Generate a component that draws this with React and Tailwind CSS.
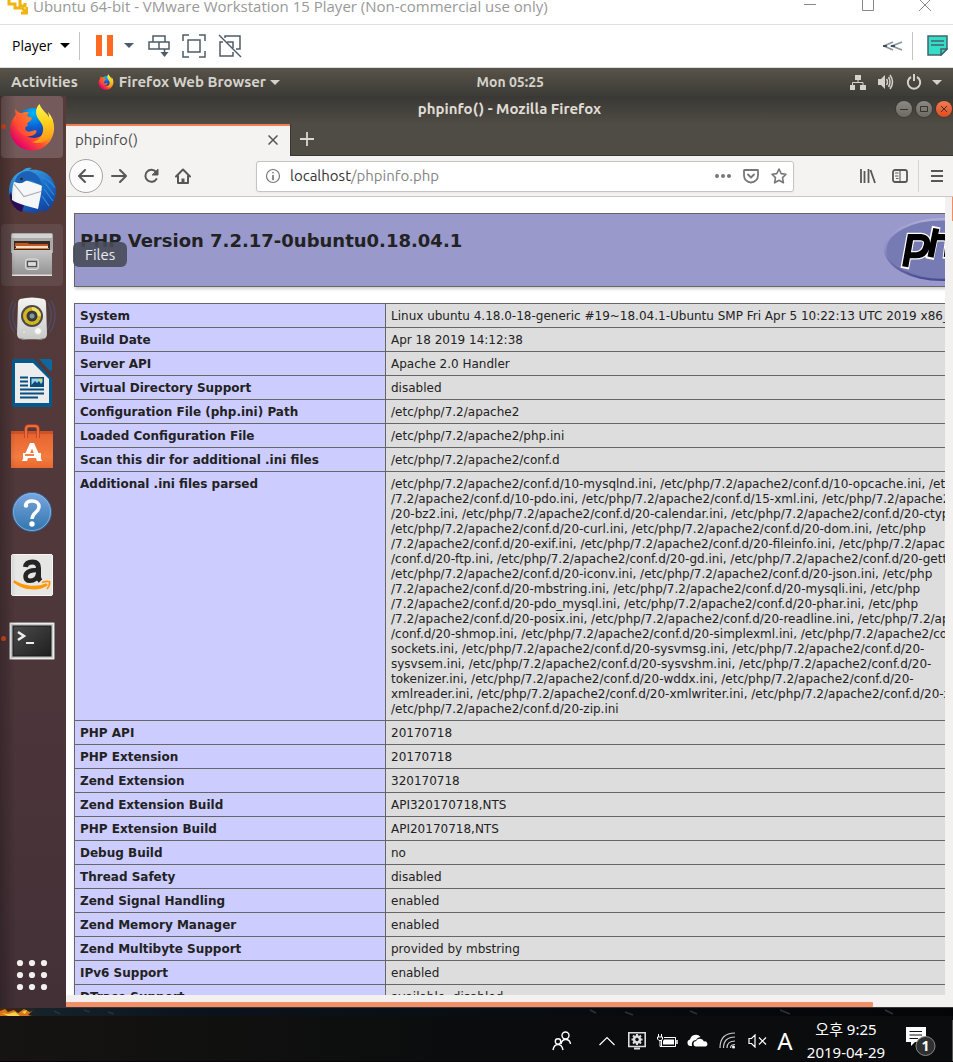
import React from "react";

const INFO_ROWS = [
  ["System", "Linux ubuntu 4.18.0-18-generic #19~18.04.1-Ubuntu SMP Fri Apr 5 10:22:13 UTC 2019 x86_64"],
  ["Build Date", "Apr 18 2019 14:12:38"],
  ["Server API", "Apache 2.0 Handler"],
  ["Virtual Directory Support", "disabled"],
  ["Configuration File (php.ini) Path", "/etc/php/7.2/apache2"],
  ["Loaded Configuration File", "/etc/php/7.2/apache2/php.ini"],
  ["Scan this dir for additional .ini files", "/etc/php/7.2/apache2/conf.d"],
  [
    "Additional .ini files parsed",
    [
      "/etc/php/7.2/apache2/conf.d/10-mysqlnd.ini, /etc/php/7.2/apache2/conf.d/10-opcache.ini, /etc/php",
      "/7.2/apache2/conf.d/10-pdo.ini, /etc/php/7.2/apache2/conf.d/15-xml.ini, /etc/php/7.2/apache2/conf.d",
      "/20-bz2.ini, /etc/php/7.2/apache2/conf.d/20-calendar.ini, /etc/php/7.2/apache2/conf.d/20-ctype.ini,",
      "/etc/php/7.2/apache2/conf.d/20-curl.ini, /etc/php/7.2/apache2/conf.d/20-dom.ini, /etc/php",
      "/7.2/apache2/conf.d/20-exif.ini, /etc/php/7.2/apache2/conf.d/20-fileinfo.ini, /etc/php/7.2/apache2",
      "/conf.d/20-ftp.ini, /etc/php/7.2/apache2/conf.d/20-gd.ini, /etc/php/7.2/apache2/conf.d/20-gettext.ini,",
      "/etc/php/7.2/apache2/conf.d/20-iconv.ini, /etc/php/7.2/apache2/conf.d/20-json.ini, /etc/php",
      "/7.2/apache2/conf.d/20-mbstring.ini, /etc/php/7.2/apache2/conf.d/20-mysqli.ini, /etc/php",
      "/7.2/apache2/conf.d/20-pdo_mysql.ini, /etc/php/7.2/apache2/conf.d/20-phar.ini, /etc/php",
      "/7.2/apache2/conf.d/20-posix.ini, /etc/php/7.2/apache2/conf.d/20-readline.ini, /etc/php/7.2/apache2",
      "/conf.d/20-shmop.ini, /etc/php/7.2/apache2/conf.d/20-simplexml.ini, /etc/php/7.2/apache2/conf.d/20-",
      "sockets.ini, /etc/php/7.2/apache2/conf.d/20-sysvmsg.ini, /etc/php/7.2/apache2/conf.d/20-",
      "sysvsem.ini, /etc/php/7.2/apache2/conf.d/20-sysvshm.ini, /etc/php/7.2/apache2/conf.d/20-",
      "tokenizer.ini, /etc/php/7.2/apache2/conf.d/20-wddx.ini, /etc/php/7.2/apache2/conf.d/20-",
      "xmlreader.ini, /etc/php/7.2/apache2/conf.d/20-xmlwriter.ini, /etc/php/7.2/apache2/conf.d/20-xsl.ini,",
      "/etc/php/7.2/apache2/conf.d/20-zip.ini",
    ],
  ],
  ["PHP API", "20170718"],
  ["PHP Extension", "20170718"],
  ["Zend Extension", "320170718"],
  ["Zend Extension Build", "API320170718,NTS"],
  ["PHP Extension Build", "API20170718,NTS"],
  ["Debug Build", "no"],
  ["Thread Safety", "disabled"],
  ["Zend Signal Handling", "enabled"],
  ["Zend Memory Manager", "enabled"],
  ["Zend Multibyte Support", "provided by mbstring"],
  ["IPv6 Support", "enabled"],
  ["DTrace Support", "available, disabled"],
];

function FirefoxIcon({ className, id }) {
  return (
    <svg viewBox="0 0 48 48" className={className} aria-hidden="true">
      <defs>
        <linearGradient id={id + "a"} x1="0.85" y1="0.1" x2="0.15" y2="0.85">
          <stop offset="0" stopColor="#fff44f" />
          <stop offset="0.35" stopColor="#ffa316" />
          <stop offset="0.65" stopColor="#ff4a32" />
          <stop offset="1" stopColor="#e4006c" />
        </linearGradient>
        <radialGradient id={id + "b"} cx="0.5" cy="0.15" r="0.9">
          <stop offset="0" stopColor="#00b7f5" />
          <stop offset="0.45" stopColor="#0a63d8" />
          <stop offset="1" stopColor="#2b1a78" />
        </radialGradient>
        <linearGradient id={id + "c"} x1="0.4" y1="0" x2="0.5" y2="1">
          <stop offset="0" stopColor="#fff44f" />
          <stop offset="0.45" stopColor="#ffd620" />
          <stop offset="1" stopColor="#ff9216" />
        </linearGradient>
        <linearGradient id={id + "d"} x1="1" y1="0" x2="0" y2="0.7">
          <stop offset="0" stopColor="#ff9a1e" />
          <stop offset="1" stopColor="#ff3f3a" />
        </linearGradient>
      </defs>
      <circle cx="25" cy="22" r="17" fill={"url(#" + id + "b)"} />
      <path
        d="M7 5.500C7.500 8 9 9.500 10.500 10C5 14 2 20 2 26C2 38 12 47.500 24 47.500C37 47.500 46 37 46 25C46 19 43.500 12.500 40 9C42.500 16 41 24 37 29C33.500 34 28 36 22.500 34.500C17 33 14.500 29.500 14.300 25.500C12 20 11 15 13.500 10.500C10 9.500 8 8 7 5.500Z"
        fill={"url(#" + id + "a)"}
      />
      <path
        d="M31.500 1C27.500 5 27 10 30 15.500C34 21 36.500 24 34.500 30C33 35 29 38.500 24 39C31 41.500 39 39 42.500 33C46 27.500 46.500 20 43.500 14C43 17 42.500 17.500 41.500 15.500C40 10.500 34 8 31.500 1Z"
        fill={"url(#" + id + "c)"}
      />
      <path
        d="M7 5.500C8 9 10 10.500 13 10.500C16.500 8.500 20 9 21 9.500C19.500 11 19 12.500 19.500 13.500L23.500 14.500C24 16 23.500 17.500 19.500 20C19 22 20 23 20 23C17 23 16 26 19 28C22 30 25 26.500 28 27.500C29.500 28 28 31.500 24.500 32.500C17 35 10 30 9 24Z"
        fill={"url(#" + id + "d)"}
      />
    </svg>
  );
}

function ThunderbirdIcon() {
  return (
    <svg viewBox="0 0 48 48" className="size-12" aria-hidden="true">
      <defs>
        <linearGradient id="tb" x1="0.3" y1="0" x2="0.8" y2="1">
          <stop offset="0" stopColor="#3fa6e0" />
          <stop offset="0.5" stopColor="#1a6cc8" />
          <stop offset="1" stopColor="#123f9b" />
        </linearGradient>
      </defs>
      <path d="M1 22C2 12 8 6 14 4C17 1 20 0 24 1C22 2 21 3 22 3C36 1 47 10 48 24C48 34 43 42 35 46C36 44 35 43 34 43L28 46C14 46 0 38 1 22Z" fill="url(#tb)" />
      <path d="M3 25C4 33 9 37 16 38L14 45C7 43 2 36 1.500 28Z" fill="#2d0d56" />
      <path d="M6 15L17 13L34 18.500L33 27L30 42C20 39 10 37 4 33C4 28 4 20 6 15Z" fill="#f5f6f7" />
      <path d="M6 17L16 29.500L33 24.500" fill="none" stroke="#a9adb5" strokeWidth="1.200" />
      <path d="M7 15C8 8 14 4 20 4C28 5 33 11 34 19C27 14 20 12 16 15C13 17 9 16 7 15Z" fill="#1c61b8" />
      <circle cx="13.500" cy="12" r="1.500" fill="#382a24" />
      <path d="M33 10C40 12 44 16 47 21M37 16L46 28M36 22L45 34M34 29L41 39" fill="none" stroke="#2f8cd8" strokeWidth="1.200" />
    </svg>
  );
}

function FilesIcon() {
  return (
    <svg viewBox="0 0 48 48" className="size-12" aria-hidden="true">
      <defs>
        <linearGradient id="fl" x1="0" y1="0" x2="0" y2="1">
          <stop offset="0" stopColor="#c6c6c6" />
          <stop offset="1" stopColor="#919191" />
        </linearGradient>
      </defs>
      <path d="M3 4Q3 2 5 2H43Q45 2 45 4V22H3Z" fill="#aaa" />
      <path d="M4 3H44V7H4Z" fill="#d2d2d2" />
      <path d="M6 10H42V20H6Z" fill="#342b27" />
      <path d="M7 13Q7 12 8 12H20L21 13H40V16H7Z" fill="#c4571f" />
      <path d="M8 15H40V17H8Z" fill="#f3dfca" />
      <path d="M7 17H41V18H7Z" fill="#e6772e" />
      <path d="M4 19H44L44 45H4Z" fill="url(#fl)" />
      <path d="M4 43.500H44V45H4Z" fill="#e2e2e2" />
      <rect x="17.500" y="28" width="13" height="10.500" rx="2.500" fill="#b8b8b8" stroke="#dedede" />
      <rect x="19.500" y="30.500" width="9" height="5" fill="#ddd" stroke="#525252" strokeWidth="1.200" />
    </svg>
  );
}

function RhythmboxIcon() {
  return (
    <svg viewBox="0 0 48 48" className="size-12" aria-hidden="true">
      <defs>
        <linearGradient id="rb" x1="0" y1="0" x2="0" y2="1">
          <stop offset="0" stopColor="#f4f4f3" />
          <stop offset="1" stopColor="#c9cac8" />
        </linearGradient>
      </defs>
      <path d="M5 6C0 14 0 28 6 37M8 8C3 16 4 27 9 35M43 6C49 14 48 28 42 37M40 8C45 16 44 27 39 35" fill="none" stroke="#4d5370" strokeOpacity="0.7" strokeWidth="1.500" />
      <path d="M12 4Q24 1 36 4Q38 5 38 8L39 39Q39 44 34 44H14Q9 44 9 39L10 8Q10 5 12 4Z" fill="url(#rb)" />
      <circle cx="24" cy="21" r="11" fill="#4b4a49" />
      <circle cx="24" cy="21" r="9" fill="#d5b622" />
      <path d="M24 12A9 9 0 0 1 33 21L24 21Z" fill="#f2df62" />
      <circle cx="24" cy="21" r="5.500" fill="#343b3f" />
      <circle cx="24" cy="21" r="2.500" fill="#8b9698" />
      <circle cx="30" cy="36" r="3.500" fill="#f8f8f8" stroke="#d6d6d5" />
      <circle cx="16" cy="37" r="2" fill="#e0e0df" stroke="#cacac9" />
      <path d="M12 43Q24 46 36 43L34 45H14Z" fill="#8a8385" />
    </svg>
  );
}

function WriterIcon() {
  return (
    <svg viewBox="0 0 48 48" className="size-12" aria-hidden="true">
      <path d="M6 0H26L44 20V46Q44 48 42 48H6Q4 48 4 46V2Q4 0 6 0Z" fill="#05598f" />
      <path d="M31 0H42Q44 0 44 2V12L41 11Z" fill="#0c689f" />
      <path d="M7 4H25L41 20V44H7Z" fill="#ededed" />
      <path d="M12 18.500H20M12 22.500H20M12 26.500H20M12 30.500H36M12 34.500H36M12 38.500H30" stroke="#064f7f" strokeWidth="2" />
      <rect x="22" y="18" width="14" height="10" fill="#0a4d78" />
      <path d="M23.500 19.500H34.500V23L33 25L31 22L29 24L27 22L23.500 26Z" fill="#9fd2e8" />
      <path d="M31 20H34V22H31Z" fill="#efd346" />
    </svg>
  );
}

function SoftwareIcon() {
  return (
    <svg viewBox="0 0 48 48" className="size-12" aria-hidden="true">
      <defs>
        <linearGradient id="sw" x1="0" y1="0" x2="0" y2="1">
          <stop offset="0" stopColor="#e3612f" />
          <stop offset="0.7" stopColor="#f37c3f" />
          <stop offset="1" stopColor="#e8682f" />
        </linearGradient>
      </defs>
      <path d="M3 8H45V45H3Z" fill="url(#sw)" />
      <path d="M3 8H45V11H3Z" fill="#cf5129" />
      <path d="M18 15V6Q18 3 21 3H27Q30 3 30 6V15" fill="none" stroke="#b9431f" strokeWidth="3.500" />
      <path d="M18 15V6Q18 3 21 3H27Q30 3 30 6V15" fill="none" stroke="#ec6d3c" strokeWidth="2" />
      <path d="M22 20H26L34 38H29L24 25.500L19 38H14Z" fill="#fff" />
      <path d="M15 30H33V35H15Z" fill="#fff" />
      <path d="M17 32H26" stroke="#ef743a" strokeWidth="1.800" />
    </svg>
  );
}

function HelpDockIcon() {
  return (
    <svg viewBox="0 0 48 48" className="size-12" aria-hidden="true">
      <defs>
        <linearGradient id="hp" x1="0" y1="0" x2="0" y2="1">
          <stop offset="0" stopColor="#7aa6e0" />
          <stop offset="1" stopColor="#2f75ab" />
        </linearGradient>
      </defs>
      <circle cx="24" cy="25" r="19.500" fill="url(#hp)" stroke="#2f659b" />
      <circle cx="24" cy="25" r="18.500" fill="none" stroke="#90b8e4" strokeWidth="0.800" />
      <path d="M17.500 18.500C18 15.500 20.500 14 24 14C28.500 14 31 16.500 31 19.500C31 25.500 24.500 25 24 32" fill="none" stroke="#fff" strokeWidth="3.500" />
      <circle cx="18" cy="18.500" r="2.200" fill="#fff" />
      <circle cx="24" cy="37" r="2.700" fill="#fff" />
    </svg>
  );
}

function AmazonIcon() {
  return (
    <svg viewBox="0 0 48 48" className="size-12" aria-hidden="true">
      <rect x="3.500" y="3.500" width="41" height="41" rx="1.500" fill="#e6e6e5" stroke="#f6f6f6" />
      <path d="M17.500 16C18 12 20.500 11 24.500 11C28.500 11 30.500 13 30.500 17V26C30.500 28 31.500 29 32.500 30" fill="none" stroke="#252525" strokeWidth="5" />
      <path d="M30 19C22 19 17.500 21 17.500 25.500C17.500 28.500 19.500 29.800 22 29.800C26 29.800 29.500 27 30 23" fill="none" stroke="#252525" strokeWidth="4.500" />
      <path d="M6 31C15 39 31 40 39 34L38 33C29 37 16 36 6.500 30Z" fill="#ff9700" stroke="#ff9700" strokeWidth="1.200" />
      <path d="M34 31.500C38 30 40 30 41.500 30.800C42 33 41 35.500 39 38" fill="none" stroke="#ff9700" strokeWidth="1.800" />
    </svg>
  );
}

function TerminalIcon() {
  return (
    <svg viewBox="0 0 48 48" className="size-12" aria-hidden="true">
      <defs>
        <linearGradient id="tm" x1="0" y1="0" x2="1" y2="1">
          <stop offset="0" stopColor="#4b4b4b" />
          <stop offset="0.5" stopColor="#353535" />
          <stop offset="1" stopColor="#1f1f1f" />
        </linearGradient>
      </defs>
      <rect x="1.500" y="7.500" width="45" height="37" rx="1" fill="#c9c9c9" stroke="#8c8c8c" />
      <rect x="2.500" y="8.500" width="43" height="35" fill="none" stroke="#ededed" />
      <rect x="5" y="11" width="38" height="30" fill="url(#tm)" stroke="#191919" />
      <path d="M10 17L16 21L10 25" fill="none" stroke="#eee" strokeWidth="2.500" />
      <path d="M18 28H26" stroke="#eee" strokeWidth="2" />
    </svg>
  );
}

const DOCK = [
  { label: "Firefox Web Browser", icon: <FirefoxIcon id="ffdock" className="size-12" />, active: true, running: true },
  { label: "Thunderbird Mail", icon: <ThunderbirdIcon /> },
  { label: "Files", icon: <FilesIcon />, hovered: true },
  { label: "Rhythmbox", icon: <RhythmboxIcon /> },
  { label: "LibreOffice Writer", icon: <WriterIcon /> },
  { label: "Ubuntu Software", icon: <SoftwareIcon /> },
  { label: "Help", icon: <HelpDockIcon /> },
  { label: "Amazon", icon: <AmazonIcon /> },
  { label: "Terminal", icon: <TerminalIcon />, running: true },
];

function Caret({ className }) {
  return (
    <svg viewBox="0 0 10 5" className={className} aria-hidden="true">
      <path d="M0 0H10L5 5Z" fill="currentColor" />
    </svg>
  );
}

function HostTitleBar() {
  return (
    <header className="flex h-[25px] shrink-0 items-start justify-between overflow-hidden border-b border-[#dfdfdf] bg-white pl-[7px] text-[#999]">
      <div className="flex items-start gap-[5px]">
        <svg viewBox="0 0 21 15" className="h-[15px] w-[21px] shrink-0" aria-hidden="true">
          <path d="M2 0V4H8V8H13V0M13 6H18V3M15 8L20 13M20 7V13H14" fill="none" stroke="#f0b310" strokeWidth="3" />
        </svg>
        <h1 className="-mt-[5px] whitespace-nowrap font-['Open_Sans','Noto_Sans',sans-serif] text-[15px] leading-[22px]">
          Ubuntu 64-bit - VMware Workstation 15 Player (Non-commercial use only)
        </h1>
      </div>
      <div className="flex">
        <button aria-label="Minimize" className="flex w-[58px] justify-center">
          <svg viewBox="0 0 12 12" className="h-3 w-3"><path d="M0 4.500H12" stroke="#888" /></svg>
        </button>
        <button aria-label="Maximize" className="flex w-[58px] justify-center">
          <svg viewBox="0 0 12 12" className="h-3 w-3"><path d="M.5 0V10.500H11.500V0" fill="none" stroke="#888" /></svg>
        </button>
        <button aria-label="Close" className="flex w-[56px] justify-center">
          <svg viewBox="0 0 12 12" className="h-3 w-3"><path d="M0 -1L12 11M12 -1L0 11" stroke="#888" /></svg>
        </button>
      </div>
    </header>
  );
}

function PlayerToolbar() {
  return (
    <nav aria-label="Player" className="flex h-[43px] shrink-0 items-center justify-between border-b border-[#dcdcdc] bg-white px-3 pr-[5px] pb-px text-[#4d5c68]">
      <div className="flex items-center">
        <button className="flex items-center gap-2 font-['Open_Sans','Noto_Sans',sans-serif] text-[14px] leading-5 text-black">
          Player
          <Caret className="h-[5px] w-[10px]" />
        </button>
        <div className="ml-[9px] h-7 w-px bg-[#c4c4c4]" />
        <button aria-label="Suspend" className="ml-4">
          <svg viewBox="0 0 17 21" className="h-[21px] w-[17px]"><path d="M0 0H6V21H0ZM11 0H17V21H11Z" fill="#ff6a22" /></svg>
        </button>
        <button aria-label="Power options" className="ml-[11px]">
          <Caret className="h-[5px] w-[10px]" />
        </button>
        <button aria-label="Send Ctrl+Alt+Del" className="ml-[14px]">
          <svg viewBox="0 0 22 22" className="size-[22px]" fill="none" stroke="currentColor" strokeWidth="1.500">
            <path d="M5 7V1H17V7M1 7H21V14H1ZM11 7V14" />
            <path d="M16.500 14V20" /><path d="M12.500 17H20.500L16.500 22Z" fill="currentColor" stroke="none" />
          </svg>
        </button>
        <button aria-label="Full screen" className="ml-3">
          <svg viewBox="0 0 24 24" className="size-6" fill="none" stroke="currentColor" strokeWidth="1.500">
            <path d="M1 7V1H7M17 1H23V7M23 17V23H17M7 23H1V17M6 6H18V18H6Z" />
          </svg>
        </button>
        <button aria-label="Unity mode" className="ml-3">
          <svg viewBox="0 0 24 24" className="size-6" fill="none" stroke="currentColor" strokeWidth="1.500">
            <path d="M7 4V2H22V15H18M5 8H2V22H15V18M9 8H15V14" /><path d="M1 1L23 23" />
          </svg>
        </button>
      </div>
      <div className="flex items-center">
        <button aria-label="Collapse toolbar">
          <svg viewBox="0 0 20 10" className="h-[10px] w-5" fill="none" stroke="#8b959c" strokeWidth="1.800"><path d="M10 1L1 5L10 9M19 1L9 5L19 9" /><path d="M0 5H4M8 5H12" stroke="#3f505c" /></svg>
        </button>
        <div className="ml-[9px] h-7 w-px bg-[#c4c4c4]" />
        <button aria-label="Messages" className="ml-[14px]">
          <svg viewBox="0 0 21 21" className="size-[21px]" stroke="#42646d" strokeWidth="1.500">
            <path d="M1 1H20V14L14 20H1Z" fill="#35dcc6" /><path d="M14 20V14H20ZM4 6H17M4 10H17" fill="#35dcc6" />
          </svg>
        </button>
      </div>
    </nav>
  );
}

function GnomeTopBar() {
  return (
    <div className="flex h-7 shrink-0 items-center bg-linear-to-b from-[#58534a] to-[#3d3b36] font-['Ubuntu','Noto_Sans',sans-serif] text-[15px] font-bold leading-5 text-[#d5d2cb]">
      <div className="flex w-1/2 items-center pl-[11px]">
        <button>Activities</button>
        <button className="ml-5 flex items-center whitespace-nowrap">
          <FirefoxIcon id="ffbar" className="mr-[5px] size-4" />
          Firefox Web Browser
          <Caret className="ml-1 h-[5px] w-[10px]" />
        </button>
      </div>
      <button className="text-[14px]">Mon 05:25</button>
      <div className="ml-auto flex items-center gap-[10px] pr-[11px]">
        <div className="flex items-center gap-3">
          <svg viewBox="0 0 16 16" className="size-4" role="img" aria-label="Wired network">
            <path d="M5 1H11V6H5ZM0 11H5V16H0ZM10 11H16V16H10Z" fill="currentColor" /><path d="M8 6V8.500M2.500 11V8.500H13V11" fill="none" stroke="currentColor" />
          </svg>
          <svg viewBox="0 0 16 16" className="size-4" role="img" aria-label="Volume">
            <path d="M0 5H3L7 1V15L3 11H0Z" fill="currentColor" /><path d="M8.500 5Q10.500 8 8.500 11M10.500 3Q13.500 8 10.500 13M12 1Q17 8 12 15" fill="none" stroke="currentColor" strokeWidth="1.500" />
          </svg>
          <svg viewBox="0 0 16 16" className="size-4" role="img" aria-label="Power" fill="none" stroke="currentColor" strokeWidth="2">
            <path d="M5 3A6.200 6.200 0 1 0 11 3M8 0V7" />
          </svg>
        </div>
        <Caret className="h-[5px] w-[10px]" />
      </div>
    </div>
  );
}

function Dock() {
  return (
    <aside aria-label="Dock" className="relative z-10 flex w-[66px] shrink-0 flex-col justify-between bg-linear-to-b from-[#583b38] via-[#50383b] to-[#433037] pb-[15px]">
      <ul className="flex flex-col gap-[2px]">
        {DOCK.map((item) => (
          <li key={item.label} className="relative ml-px flex h-[62px] w-[62px] items-center">
            <button
              aria-label={item.label}
              className={
                "flex h-full w-full items-center justify-center rounded-[4px] " +
                (item.active ? "bg-[#745a5a]" : item.hovered ? "bg-[#624a4a]" : "")
              }
            >
              {item.icon}
            </button>
            {item.running && <span className="absolute top-[28px] left-0 size-[5px] rounded-full bg-[#dc4c1e]" />}
            {item.hovered && (
              <span role="tooltip" className="absolute top-[18px] left-[72px] rounded-[6px] bg-[#484b58]/90 px-3 pt-[3px] pb-[2px] font-['Ubuntu','Noto_Sans',sans-serif] text-[15px] leading-5 text-[#ececf0]">
                Files
              </span>
            )}
          </li>
        ))}
      </ul>
      <button aria-label="Show Applications" className="ml-[14px] size-9">
        <svg viewBox="0 0 36 36" className="size-9" fill="#f2f0ef">
          {[6, 18, 30].map((y) => [6, 18, 30].map((x) => <circle key={x + "-" + y} cx={x} cy={y} r="3.100" />))}
        </svg>
      </button>
      <div className="pointer-events-none absolute inset-y-0 left-0 w-4 bg-linear-to-r from-black/25 to-transparent" />
    </aside>
  );
}

function WindowButton({ label, tone, children }) {
  return (
    <button aria-label={label} className={"flex size-4 items-center justify-center rounded-full ring-1 ring-[#35332e]/60 " + tone}>
      <svg viewBox="0 0 10 10" className="size-[10px]" fill="none" stroke="#35332e" strokeWidth="1">{children}</svg>
    </button>
  );
}

function NavIcon({ label, children, className }) {
  return (
    <button aria-label={label} className={"flex size-8 shrink-0 items-center justify-center " + (className || "")}>
      <svg viewBox="0 0 16 16" className="size-4" fill="none" stroke="currentColor" strokeWidth="2" strokeLinecap="round" strokeLinejoin="round">
        {children}
      </svg>
    </button>
  );
}

function BrowserChrome() {
  return (
    <>
      <div className="grid h-7 shrink-0 grid-cols-[1fr_auto_1fr] items-center bg-linear-to-b from-[#3a3834] to-[#4f4c45] pb-[2px]">
        <span />
        <h2 className="font-['Ubuntu','Noto_Sans',sans-serif] text-[15px] font-bold leading-5 text-[#e0ddd6]">phpinfo() - Mozilla Firefox</h2>
        <div className="flex justify-end gap-1 pr-px">
          <WindowButton label="Minimize window" tone="bg-linear-to-b from-[#8c8a82] to-[#6d6a62]"><path d="M1 5.500H9" /></WindowButton>
          <WindowButton label="Maximize window" tone="bg-linear-to-b from-[#8c8a82] to-[#6d6a62]"><path d="M1.500 2.500H8.500V7.500H1.500Z" /></WindowButton>
          <WindowButton label="Close window" tone="bg-linear-to-b from-[#f47b52] to-[#df4a16]"><path d="M2 2L8 8M8 2L2 8" /></WindowButton>
        </div>
      </div>
      <div className="flex h-8 shrink-0 bg-[#4f4c45]">
        <div className="flex w-56 items-center justify-between border-t-2 border-[#ef8055] bg-[#f4f3f2] pr-3 pb-[2px] pl-[9px] text-[#4a4a4a]">
          <span className="text-[15px] leading-5">phpinfo()</span>
          <button aria-label="Close tab">
            <svg viewBox="0 0 10 10" className="size-[10px]"><path d="M.5 .5L9.500 9.500M9.500 .5L.5 9.500" stroke="#555" strokeWidth="1.500" /></svg>
          </button>
        </div>
        <div className="flex grow items-center border-b border-l border-[#383632] pb-px pl-[9px]">
          <button aria-label="New tab">
            <svg viewBox="0 0 14 14" className="size-[14px]"><path d="M7 0V14M0 7H14" stroke="#dad8d3" strokeWidth="1.800" /></svg>
          </button>
        </div>
      </div>
      <div className="flex h-[41px] shrink-0 items-center border-b border-[#c9c7c3] bg-[#f4f3f2] pl-[3px] text-[#575757]">
        <button aria-label="Back" className="flex size-[34px] shrink-0 items-center justify-center rounded-full border border-[#a5a3a0] bg-[#fcfcfc]">
          <svg viewBox="0 0 16 16" className="size-4" fill="none" stroke="currentColor" strokeWidth="2" strokeLinecap="round" strokeLinejoin="round"><path d="M15 8H1.500M7 2L1 8L7 14" /></svg>
        </button>
        <NavIcon label="Forward"><path d="M1 8H14.500M9 2L15 8L9 14" /></NavIcon>
        <NavIcon label="Reload"><path d="M13 4A6 6 0 1 0 13.500 11" /><path d="M15 1.500V7H9.500Z" fill="currentColor" strokeWidth="1" /></NavIcon>
        <NavIcon label="Home"><path d="M1 8.500L8 1.500L15 8.500M3 8V15H13V8" /><path d="M8 14V10.500" strokeWidth="3" strokeLinecap="butt" /></NavIcon>
        <div className="ml-[57px] flex h-[31px] min-w-0 grow items-center rounded-[3px] border border-[#c6c4c1] bg-white shadow-xs">
          <NavIcon label="Site information" className="text-[#787878]"><circle cx="8" cy="8" r="6.500" strokeWidth="1.200" /><path d="M8 7.500V11.500M8 4.500V4.600" strokeWidth="1.700" /></NavIcon>
          <div className="relative min-w-0 grow text-[15px] leading-5">
            <input aria-label="Address" defaultValue="localhost/phpinfo.php" className="w-full bg-transparent px-px text-transparent caret-[#333] outline-none" />
            <span aria-hidden="true" className="pointer-events-none absolute inset-0 px-px text-[#858585]"><span className="text-[#333]">localhost</span>/phpinfo.php</span>
          </div>
          <NavIcon label="Page actions" className="w-7 text-[#777]"><path d="M2 8H2.010M8 8H8.010M14 8H14.010" strokeWidth="4" /></NavIcon>
          <NavIcon label="Save to Pocket" className="w-7 text-[#777]"><path d="M1 2.500Q1 2 1.500 2H14.500Q15 2 15 2.500V7.500A7 7 0 0 1 1 7.500ZM5 6.500L8 9.500L11 6.500" strokeWidth="1.800" /></NavIcon>
          <NavIcon label="Bookmark" className="w-7 text-[#777]"><path d="M8 1L10.200 5.600L15 6.200L11.500 9.600L12.400 14.800L8 12.300L3.600 14.800L4.500 9.600L1 6.200L5.800 5.600Z" strokeWidth="1.600" /></NavIcon>
        </div>
        <NavIcon label="Library" className="ml-[58px]"><path d="M1 1V15M4.500 3V15M8.500 1V15M10.500 2L15 15" strokeWidth="1.800" strokeLinecap="butt" /></NavIcon>
        <NavIcon label="Sidebars"><rect x="1" y="2" width="14" height="12" rx="2" strokeWidth="1.800" /><path d="M8 2V14M3.500 5H6M3.500 8H6M4.500 10.500H6" strokeWidth="1.100" /></NavIcon>
        <div className="ml-[2px] h-8 w-px bg-[#d5d3d0]" />
        <NavIcon label="Open menu" className="ml-[2px]"><path d="M2 3H14M2 8H14M2 13H14" strokeWidth="1.800" strokeLinecap="butt" /></NavIcon>
      </div>
    </>
  );
}

function PhpLogo() {
  return (
    <svg viewBox="0 0 120 67" className="h-[64px] w-[120px] shrink-0" role="img" aria-label="PHP logo">
      <defs>
        <linearGradient id="pl" x1="0" y1="0" x2="0" y2="1">
          <stop offset="0" stopColor="#aeaed6" />
          <stop offset="0.5" stopColor="#8b8cc0" />
          <stop offset="1" stopColor="#484893" />
        </linearGradient>
      </defs>
      <ellipse cx="60" cy="33" rx="60.500" ry="33" fill="url(#pl)" />
      <ellipse cx="60" cy="33" rx="58" ry="30.500" fill="#777bb3" />
      <g fill="none" strokeLinejoin="miter">
        <path d="M21 53L27 20H38Q46 21 44 29Q42 39 33 39H25M54 9L47 43M52 20H62Q69 21 67 27L65 43M74 53L80 20H91Q99 21 97 29Q95 39 86 39H78" stroke="#fff" strokeWidth="9" />
        <path d="M21.500 51L27 20H38Q46 21 44 29Q42 39 33 39H25M54 11L48 41M52 20H62Q69 21 67 27L65 41M75 51L80 20H91Q99 21 97 29Q95 39 86 39H78" stroke="#000" strokeWidth="6.500" />
      </g>
    </svg>
  );
}

function PhpInfoPage() {
  return (
    <div className="flex min-h-0 grow">
      <main className="min-w-0 grow overflow-hidden bg-white px-2 pt-4 font-['DejaVu_Sans',sans-serif] text-[#222]">
        <div className="flex h-[74px] w-[934px] items-start justify-between border border-[#666] bg-[#9999cc] px-[5px] py-1 shadow-[1px_2px_3px_#ccc]">
          <h1 className="pt-3 text-[18px] font-bold leading-[21px]">PHP Version 7.2.17-0ubuntu0.18.04.1</h1>
          <PhpLogo />
        </div>
        <table className="mt-4 w-[934px] table-fixed border-collapse text-[12px] leading-[15px] shadow-[1px_2px_3px_#ccc]">
          <colgroup><col className="w-[311px]" /><col /></colgroup>
          <tbody>
            {INFO_ROWS.map(([name, value]) => (
              <tr key={name}>
                <th scope="row" className="border border-[#666] bg-[#ccccff] px-[5px] pt-[5px] pb-[3px] text-left align-top font-bold">{name}</th>
                <td className="whitespace-nowrap border border-[#666] bg-[#dddddd] px-[5px] pt-[5px] pb-[3px] align-top">
                  {Array.isArray(value) ? value.map((line) => <div key={line}>{line}</div>) : value}
                </td>
              </tr>
            ))}
          </tbody>
        </table>
      </main>
      <div className="flex w-2 shrink-0 items-start justify-end bg-[#f2f1f0]">
        <div className="h-6 w-px bg-[#f08c66]" />
      </div>
    </div>
  );
}

function TrayButton({ label, children, className }) {
  return (
    <button aria-label={label} className={"flex h-full shrink-0 items-center justify-center " + (className || "w-[30px]")}>
      {children}
    </button>
  );
}

function HostTaskbar() {
  return (
    <footer className="flex h-[46px] shrink-0 items-center justify-end border-b border-[#08000a] bg-linear-to-r from-[#151412] via-[#0b0c0d] to-[#0b0c0d] pt-1 font-['Noto_Sans','Noto_Sans_CJK_KR',sans-serif] text-white">
      <TrayButton label="People" className="mr-[10px] w-[40px]">
        <svg viewBox="0 0 20 20" className="size-5" fill="none" stroke="#fff" strokeWidth="1.400"><circle cx="13.500" cy="4.500" r="3.500" /><circle cx="6" cy="10.500" r="2.700" /><path d="M9 13Q10 8.500 13.500 8.500Q18 8.500 18.500 13M1 19Q2 13.500 6 13.500Q10 13.500 11 19" /></svg>
      </TrayButton>
      <TrayButton label="Show hidden icons">
        <svg viewBox="0 0 16 10" className="h-[10px] w-4" fill="none" stroke="#fff" strokeWidth="1.200"><path d="M.5 9L8 1.500L15.500 9" /></svg>
      </TrayButton>
      <TrayButton label="Display settings">
        <svg viewBox="0 0 18 18" className="size-[18px]" fill="none" stroke="#ddd"><path d="M.8 .8H17.200V14.500H.8Z" strokeWidth="1.600" /><circle cx="9" cy="7.500" r="3" strokeWidth="2.500" /><path d="M9 2V13M3.500 7.500H14.500M5 3.500L13 11.500M13 3.500L5 11.500" strokeWidth="2" /><circle cx="9" cy="7.500" r="1.700" fill="#0b0c0d" stroke="none" /><path d="M6 16.500H12" strokeWidth="2" /></svg>
      </TrayButton>
      <TrayButton label="Battery">
        <svg viewBox="0 0 21 14" className="h-[14px] w-[21px]" fill="none" stroke="#fff"><path d="M4.500 6V12.500H18.500V3.500H7M1.500 0V3M4.500 0V3M.5 3H5.500V5L4 6.500H2L.5 5ZM3 6V12.500H5" /><path d="M7 5.500H17V10.500H6V7Z" fill="#fff" stroke="none" /><path d="M20 6V10" strokeWidth="1.500" /></svg>
      </TrayButton>
      <TrayButton label="OneDrive">
        <svg viewBox="0 0 21 13" className="h-[13px] w-[21px]" fill="#fff"><path d="M5 12H3.500A3.300 3.300 0 0 1 3 5.500A6 6 0 0 1 13.500 3Q10 3.500 9 6Q4 6.500 5 12Z" /><path d="M8.500 12.500A2.800 2.800 0 0 1 9 7A4.500 4.500 0 0 1 17 7.500A2.600 2.600 0 0 1 18.500 12.500Z" /></svg>
      </TrayButton>
      <TrayButton label="Wi-Fi">
        <svg viewBox="0 0 17 17" className="size-[17px]" fill="none" stroke="#ccc" strokeWidth="1.200"><path d="M1 16Q1 1 16 1M4.500 16Q4.500 5 16 5M8 16Q8 9 16 9M11.500 16Q11.500 12.500 16 12.500" /><circle cx="14.500" cy="15" r="1.500" fill="#fff" stroke="none" /></svg>
      </TrayButton>
      <TrayButton label="Volume muted">
        <svg viewBox="0 0 19 14" className="h-[14px] w-[19px]" fill="none" stroke="#fff" strokeWidth="1.200"><path d="M1 4.500H3.500L7 1V13L3.500 9.500H1ZM11 3.500L18 10.500M18 3.500L11 10.500" /></svg>
      </TrayButton>
      <button aria-label="Input language" className="flex h-full w-[26px] shrink-0 items-center justify-center text-[24px] leading-7">A</button>
      <button className="w-[92px] shrink-0 pr-[2px] pl-[6px] text-center text-[15px] leading-[23px]">
        <span className="block">오후 9:25</span>
        <span className="block">2019-04-29</span>
      </button>
      <TrayButton label="Notifications" className="w-[62px]">
        <svg viewBox="0 0 30 32" className="h-8 w-[30px]">
          <path d="M0 2H20V17H9L5 21V17H0Z" fill="#fff" /><path d="M3.500 6.500H16M3.500 10H16M3.500 13.500H12" stroke="#111" strokeWidth="1.200" />
          <circle cx="19.500" cy="21" r="9.500" fill="#303030" stroke="#888" />
          <text x="19.500" y="26" textAnchor="middle" fill="#fff" fontSize="14" fontWeight="700" fontFamily="Noto Sans, sans-serif">1</text>
        </svg>
      </TrayButton>
      <div className="h-full w-px bg-[#555]" />
    </footer>
  );
}

export default function App() {
  return (
    <div className="flex h-screen flex-col overflow-hidden bg-[#0b0c0d]">
      <HostTitleBar />
      <PlayerToolbar />
      <GnomeTopBar />
      <div className="flex min-h-0 grow">
        <Dock />
        <section aria-label="Mozilla Firefox" className="flex min-w-0 grow flex-col font-['Ubuntu','Noto_Sans',sans-serif]">
          <BrowserChrome />
          <PhpInfoPage />
          <div className="flex h-[13px] shrink-0 items-end border-b border-[#3a3836] bg-[#f2f1f0]">
            <div className="h-[5px] w-[91%] rounded-r-[1px] bg-[#f18f69]" />
          </div>
        </section>
      </div>
      <svg viewBox="0 0 953 8" preserveAspectRatio="none" className="h-2 w-full shrink-0" aria-hidden="true">
        <defs>
          <linearGradient id="wp" x1="0" x2="1"><stop offset="0" stopColor="#4a260c" /><stop offset="0.04" stopColor="#16232b" /><stop offset="0.2" stopColor="#0b131c" /><stop offset="1" stopColor="#040507" /></linearGradient>
        </defs>
        <path d="M0 0H953V8H0Z" fill="url(#wp)" />
        <path d="M0 3L5 1L8 4L14 2L18 5L24 1L30 4L33 2L28 7L32 8H0Z" fill="#d5761a" />
        <path d="M2 5L8 6L15 4L20 8H8ZM22 4L27 2L25 6Z" fill="#f7d34b" />
        <path d="M54 3L60 6M84 2L90 4M108 4L114 6M590 2L596 5M625 4L633 7M690 3L697 6M780 2L790 6M885 2L893 6" stroke="#2a3238" strokeWidth="1.500" />
      </svg>
      <HostTaskbar />
    </div>
  );
}
